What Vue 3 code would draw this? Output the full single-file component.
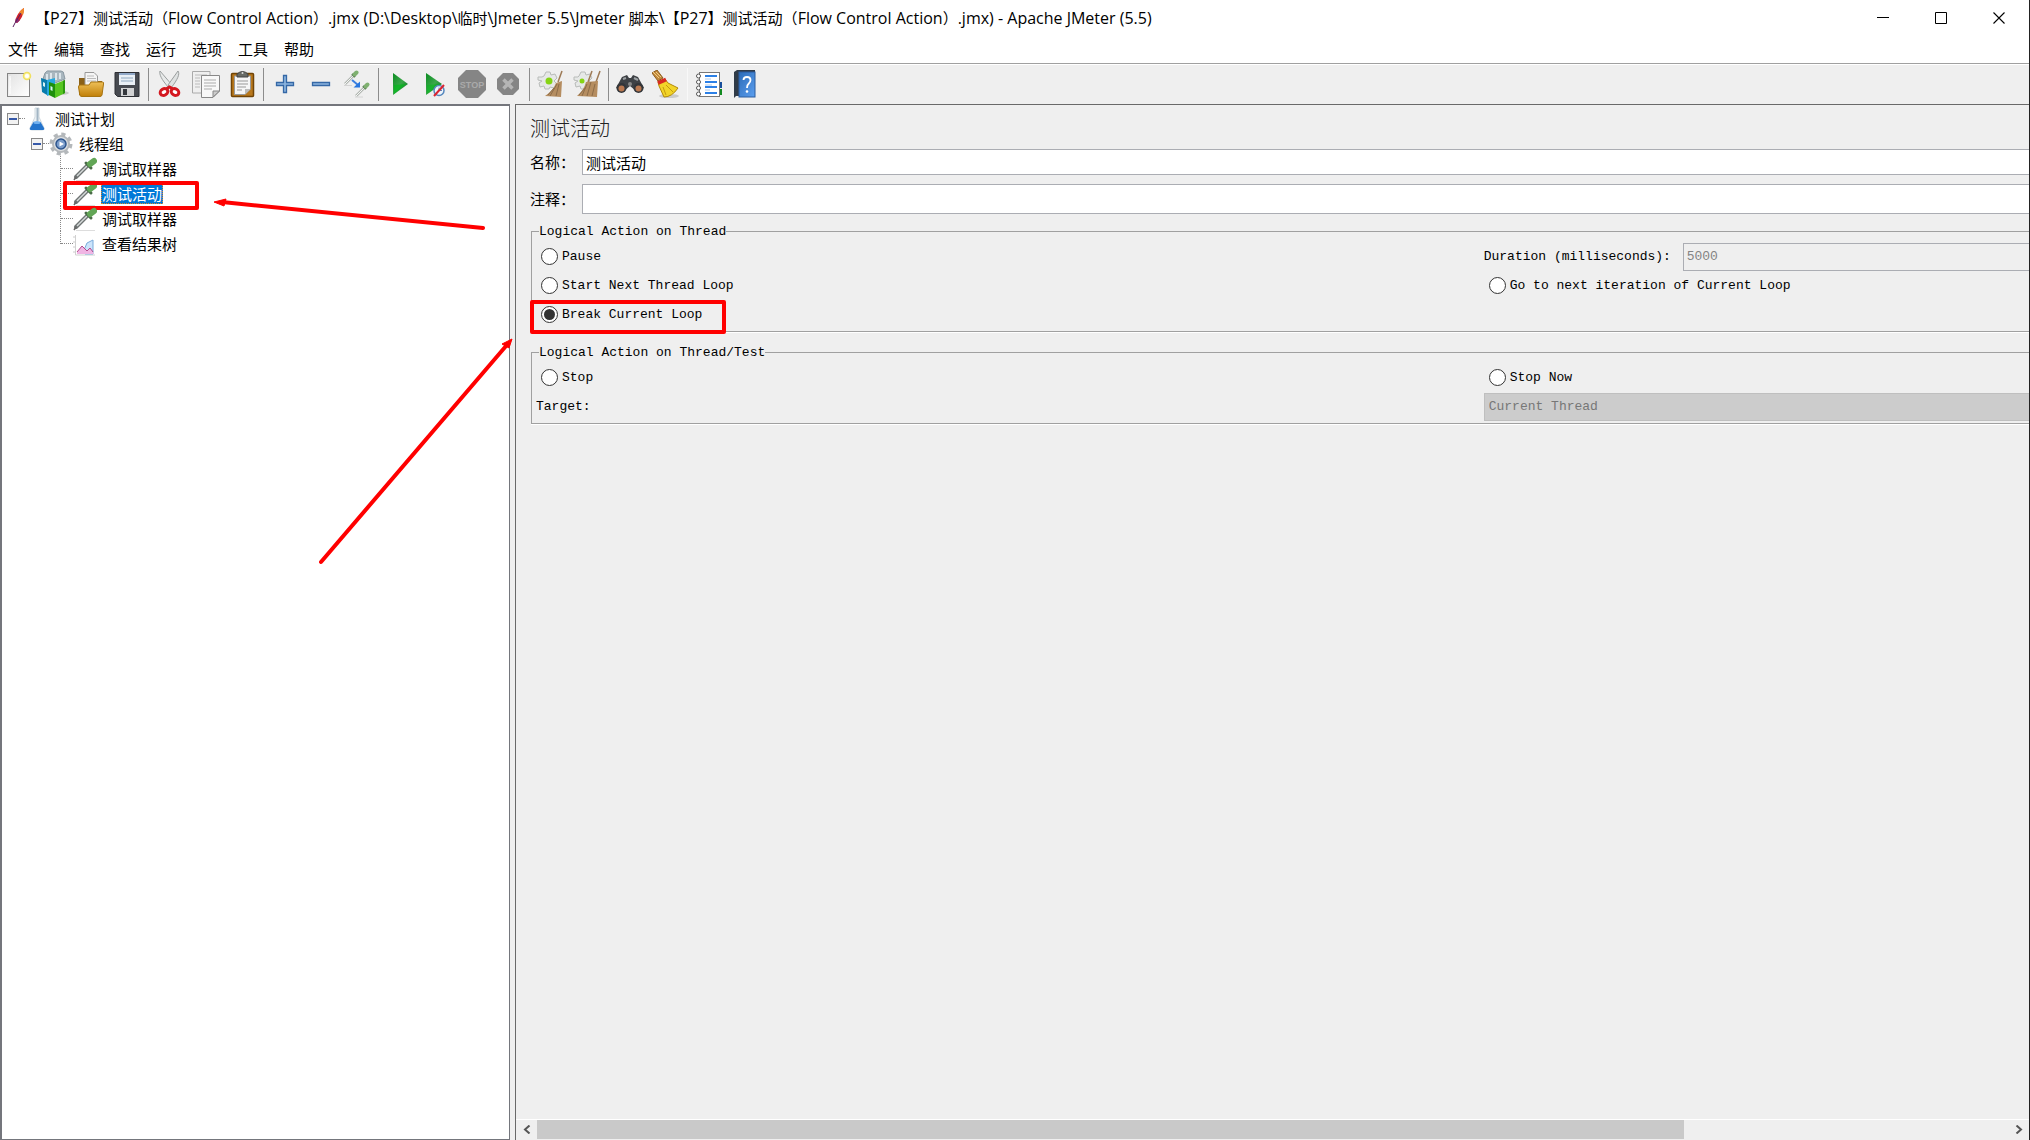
<script setup>
import { ref } from 'vue'

const menus = ['文件', '编辑', '查找', '运行', '选项', '工具', '帮助']
const action = ref('break')
const name = ref('测试活动')
const comment = ref('')
const duration = ref('5000')
</script>

<template>
  <div class="window">
    <header class="titlebar">
      <svg class="feather" width="14" height="22" viewBox="0 0 14 22">
        <path d="M12 1C8 3 4 9 3 15L5 16C9 13 12 7 12 1Z" fill="#d22128" />
        <path d="M12 1C10 2 8 4 7 6L11 8C12 5 12 3 12 1Z" fill="#f08a2c" />
        <path d="M4 11L3 15L5 16L8 13Z" fill="#8a2a72" />
        <path d="M9 6L3 16L1 20" fill="none" stroke="#5a2060" stroke-width="1" />
      </svg>
      <h1 class="caption"><span class="han">【</span>P27<span class="han">】测试活动（</span>Flow Control Action<span class="han">）</span>.jmx (D:\Desktop\<span class="han">临时</span>\Jmeter 5.5\Jmeter <span class="han">脚本</span>\<span class="han">【</span>P27<span class="han">】测试活动（</span>Flow Control Action<span class="han">）</span>.jmx) - Apache JMeter (5.5)</h1>
      <button class="winbtn" aria-label="Minimize"><svg width="12" height="12"><path d="M0 5.500H12" stroke="#000" /></svg></button>
      <button class="winbtn" aria-label="Maximize"><svg width="12" height="12"><path d="M.5 .5H11.500V11.500H.5Z" fill="none" stroke="#000" /></svg></button>
      <button class="winbtn" aria-label="Close"><svg width="12" height="12"><path d="M.5 .5L11.500 11.500M11.500 .5L.5 11.500" stroke="#000" stroke-width="1.100" /></svg></button>
    </header>

    <nav class="menubar">
      <button v-for="m in menus" :key="m" class="menu">{{ m }}</button>
    </nav>

    <div class="toolbar">
      <button class="tool" aria-label="New">
        <svg viewBox="0 0 28 28">
          <defs>
            <linearGradient id="paper" x1="0" y1="0" x2="1" y2="1"><stop offset="0" stop-color="#e2e2e2" /><stop offset="1" stop-color="#fff" /></linearGradient>
            <linearGradient id="folder" x1="0" y1="0" x2="0" y2="1"><stop offset="0" stop-color="#eec058" /><stop offset="1" stop-color="#c07f08" /></linearGradient>
            <linearGradient id="play" x1="0" y1="0" x2="1" y2="1"><stop offset="0" stop-color="#0c8c22" /><stop offset=".5" stop-color="#3aa84a" /><stop offset="1" stop-color="#006818" /></linearGradient>
            <linearGradient id="book" x1="0" y1="0" x2="1" y2="1"><stop offset="0" stop-color="#2c6cb8" /><stop offset="1" stop-color="#5c9ff0" /></linearGradient>
          </defs>
          <rect x="2.500" y="3.500" width="22" height="23" fill="url(#paper)" stroke="#858585" />
          <path d="M5 6V24M5 9h1M5 17h1" stroke="#fff" />
          <circle cx="22" cy="6" r="3.500" fill="#fff8b0" stroke="#f0e060" stroke-width="1.500" />
          <circle cx="22" cy="6" r="2" fill="#fff" />
        </svg>
      </button>
      <button class="tool" aria-label="Templates">
        <svg viewBox="0 0 28 28">
          <ellipse cx="18" cy="23" rx="10" ry="2" fill="#c8cac6" />
          <path d="M2 9L4 3Q6 0 9 1L20 1Q23 1 23 5L24 9L14 13Z" fill="#a9b7bf" stroke="#8a99a2" />
          <path d="M6 4v6M10 3v7M15 3v7M19 3v6" stroke="#dce5ea" stroke-width="2" />
          <path d="M0 8L6 10V25L1 22Z" fill="#087cad" /><path d="M6 10L14 8V23L6 26Z" fill="#27a8df" />
          <path d="M8 12L14 14V28L8 25Z" fill="#1d8f0c" /><path d="M14 14L24 10V23L14 28Z" fill="#56c620" />
          <path d="M2 12l2 1v4l-2-1ZM9.500 16l2 1v4l-2-1Z" fill="#d6f3f5" />
          <path d="M22 10.800L24 10V23L22 24Z" fill="#2c980f" />
        </svg>
      </button>
      <button class="tool" aria-label="Open">
        <svg viewBox="0 0 28 28">
          <path d="M2 8H8L10 11H25V25H2Z" fill="#8a6118" />
          <path d="M8 2.500H17L20.500 6V18H8Z" fill="#f5f5f5" stroke="#999" />
          <path d="M10 6h7M10 8.500h9M10 11h9" stroke="#bbb" />
          <path d="M3 15H12L14 12H25.500Q27 12 26.500 14L25 25Q24.500 26.500 23 26.500H5Q3 26.500 2.800 25L1.500 17Q1.500 15 3 15Z" fill="url(#folder)" stroke="#a87410" />
        </svg>
      </button>
      <button class="tool" aria-label="Save">
        <svg viewBox="0 0 28 28">
          <path d="M2 2.500H26V26.500H4.500L2 24Z" fill="#474a50" stroke="#2d2f34" />
          <rect x="6" y="3" width="16" height="12" fill="#e9eff5" /><rect x="6" y="3" width="16" height="2" fill="#91a9c8" />
          <path d="M8 8h12M8 11h12" stroke="#8fa8bf" />
          <rect x="8" y="18" width="13" height="8" fill="#d1d2d3" /><rect x="10" y="19" width="4" height="6" fill="#34373c" />
        </svg>
      </button>
      <span class="sep"></span>
      <button class="tool" aria-label="Cut">
        <svg viewBox="0 0 28 28">
          <path d="M4 1C3 4 5 9 13 18L16 15Z" fill="#e8eaea" stroke="#9a9e9e" /><path d="M22 1C24 4 22 9 15 18L12 15Z" fill="#dfe2e2" stroke="#9a9e9e" />
          <ellipse cx="8" cy="22" rx="4" ry="3.200" transform="rotate(-30 8 22)" fill="#fff" stroke="#d41820" stroke-width="3" />
          <ellipse cx="19" cy="22" rx="4" ry="3.200" transform="rotate(30 19 22)" fill="#fff" stroke="#d41820" stroke-width="3" />
          <path d="M10 19L13.500 17L17 19" fill="none" stroke="#d41820" stroke-width="3" />
        </svg>
      </button>
      <button class="tool" aria-label="Copy">
        <svg viewBox="0 0 28 28">
          <path d="M0.500 1.500H18V23H.5Z" fill="#efefef" stroke="#aaa" /><path d="M3 5h12M3 8h5M3 11h5M3 14h5M3 17h5" stroke="#bbb" />
          <path d="M9.500 5.500H27.500V21L21 27.500H9.500Z" fill="#f8f8f8" stroke="#888" /><path d="M12 10h12M12 13h12M12 16h12M12 19h8" stroke="#aaa" /><path d="M21 27V21H27.500Z" fill="#ccc" stroke="#888" />
        </svg>
      </button>
      <button class="tool" aria-label="Paste">
        <svg viewBox="0 0 28 28">
          <rect x="3.500" y="3.500" width="22" height="23" rx="1" fill="#b9781c" stroke="#704407" stroke-width="1.500" />
          <path d="M6.500 6H22.500V19L17 24.500H6.500Z" fill="#f6f6f6" stroke="#999" /><path d="M9 11h11M9 14h11M9 17h9M9 20h5" stroke="#999" /><path d="M17 24V19H22.500Z" fill="#bbb" />
          <path d="M9 7V4Q14.500-1 20 4V7Z" fill="#686b66" stroke="#444" /><circle cx="14.500" cy="3" r="1" fill="#ddd" />
        </svg>
      </button>
      <span class="sep"></span>
      <button class="tool" aria-label="Expand all">
        <svg viewBox="0 0 28 28"><path d="M12.500 5.500H15.500V12.500H22.500V15.500H15.500V22.500H12.500V15.500H5.500V12.500H12.500Z" fill="#8cb5df" stroke="#3568a6" stroke-width="1.300" /></svg>
      </button>
      <button class="tool" aria-label="Collapse all">
        <svg viewBox="0 0 28 28"><path d="M5.500 12.500H22.500V15.500H5.500Z" fill="#8cb5df" stroke="#3568a6" stroke-width="1.300" /></svg>
      </button>
      <button class="tool" aria-label="Toggle">
        <svg viewBox="0 0 28 28">
          <path d="M2 14L10 6" stroke="#b0b6b0" stroke-width="2.500" /><path d="M2 14L10 6" stroke="#f5f5f5" /><path d="M9 4L12 7" stroke="#4f6f4a" stroke-width="2" /><path d="M11.500 4.500L13.500 2.500" stroke="#7fb070" stroke-width="4" stroke-linecap="round" />
          <path d="M13 26L21 18" stroke="#b0b6b0" stroke-width="2.500" /><path d="M13 26L21 18" stroke="#f5f5f5" /><path d="M20 16L23 19" stroke="#4f6f4a" stroke-width="2" /><path d="M22.500 16.500L24.500 14.500" stroke="#7fb070" stroke-width="4" stroke-linecap="round" />
          <path d="M9 10L15 15" stroke="#3c80e0" stroke-width="2" /><path d="M17 11.500V17.500H10.500Z" fill="#2877e0" /><path d="M1 15.500h8M12 27h8" stroke="#d4d4d4" />
        </svg>
      </button>
      <span class="sep"></span>
      <button class="tool" aria-label="Start">
        <svg viewBox="0 0 28 28"><path d="M7 3L22 14L7 25Z" fill="url(#play)" /><path d="M8 15L20 14L8 24Z" fill="#00bb18" opacity=".65" /></svg>
      </button>
      <button class="tool" aria-label="Start no pauses">
        <svg viewBox="0 0 28 28">
          <path d="M4 3L20 14L4 25Z" fill="url(#play)" /><path d="M5 15L18 14L5 24Z" fill="#00bb18" opacity=".5" />
          <circle cx="17" cy="20.500" r="5" fill="#edf3fa" stroke="#5688be" stroke-width="1.500" /><path d="M17 17.500v3h3" fill="none" stroke="#5688be" /><path d="M12 26L22 15" stroke="#da2430" stroke-width="2" />
        </svg>
      </button>
      <button class="tool" aria-label="Stop" disabled>
        <svg viewBox="0 0 28 28"><path d="M8 0H20L28 8V20L20 28H8L0 20V8Z" fill="#858585" /><text x="14" y="18" text-anchor="middle" class="stop-text">STOP</text></svg>
      </button>
      <button class="tool" aria-label="Shutdown" disabled>
        <svg viewBox="0 0 28 28"><path d="M9 3H19L25 9V19L19 25H9L3 19V9Z" fill="#858585" /><path d="M9.500 9.500L18.500 18.500M18.500 9.500L9.500 18.500" stroke="#b5b5b5" stroke-width="3.500" /></svg>
      </button>
      <span class="sep"></span>
      <button class="tool" aria-label="Clear">
        <svg viewBox="0 0 28 28">
          <path d="M9 2h4l1 3 4-1 2 4-3 3 3 3-3 4-4-1-1 2H8l-1-3-4 1-1-4 3-2-4-1 0-3 4 0 2-1Z" fill="#e6e8e7" stroke="#b8bbb9" /><circle cx="12" cy="11" r="3.500" fill="#86d414" />
          <path d="M25 1L21 12" stroke="#9c7954" stroke-width="1.500" /><path d="M19 13L25 11L24 27L8 26Q16 21 19 13Z" fill="#b58d60" /><path d="M20 14L13 26M22 14L19 26M17 18L11 25" stroke="#8c6c48" />
        </svg>
      </button>
      <button class="tool" aria-label="Clear all">
        <svg viewBox="0 0 28 28">
          <path d="M8 2h4l1 3 4-1 2 4-3 3 3 3-3 4-4-1-1 2H8l-1-3-4 1-1-4 3-2-4-1 0-3 4 0 1-1Z" fill="#e6e8e7" stroke="#b8bbb9" /><circle cx="9" cy="11" r="2.500" fill="#86d414" />
          <path d="M19 1L15 12M27 1L23 12" stroke="#9c7954" stroke-width="1.500" /><path d="M13 12L25 11L24 27L4 26Q11 20 13 12Z" fill="#b58d60" /><path d="M14 14L9 26M18 12L14 26M22 14L19 26M13 17L6 25" stroke="#8c6c48" />
        </svg>
      </button>
      <span class="sep"></span>
      <button class="tool" aria-label="Search">
        <svg viewBox="0 0 28 28">
          <path d="M6 7L11 5L13 8H15L17 5L22 7L28 18L20 21L14 16L8 21L0 18Z" fill="#3e4145" /><path d="M7 9L10 8M18 8L22 10" stroke="#9da2a5" stroke-width="2" />
          <circle cx="5.500" cy="18" r="5" fill="#33363a" /><circle cx="22.500" cy="18" r="5" fill="#33363a" /><circle cx="5.500" cy="18.500" r="3" fill="#b97850" /><circle cx="22.500" cy="18.500" r="3" fill="#b97850" /><circle cx="14" cy="14" r="2" fill="#888" />
        </svg>
      </button>
      <button class="tool" aria-label="Reset search">
        <svg viewBox="0 0 28 28">
          <ellipse cx="17" cy="26" rx="10" ry="2" fill="#cbcbcb" /><path d="M0 3L5 0L11 8L6 11Z" fill="#c28a3c" stroke="#8c5c1d" /><path d="M1 2l6 6M4 2l5 5" stroke="#efcb83" />
          <path d="M6 12L13 9L16 13L26 18Q20 27 12 27L7 16Z" fill="#f2d428" stroke="#b38a08" /><path d="M11 17l3 8M14 15l7 7" stroke="#c49b10" /><path d="M6 13L14 9.500" stroke="#d82a20" stroke-width="4" />
        </svg>
      </button>
      <span class="sep faint"></span>
      <button class="tool" aria-label="Function helper">
        <svg viewBox="0 0 28 28">
          <rect x="4.500" y="2.500" width="20" height="24" fill="#fff" stroke="#777" /><path d="M10 6h12M10 12h12M10 17h12M10 23h12" stroke="#2c80e6" stroke-width="2" />
          <path d="M10 9h6M10 15h7M10 20h5" stroke="#aac9ed" /><g fill="#fff" stroke="#555"><circle cx="3.500" cy="6" r="2" /><circle cx="3.500" cy="12" r="2" /><circle cx="3.500" cy="18" r="2" /><circle cx="3.500" cy="24" r="2" /></g><path d="M25 12h2v6h-2Z" fill="#184f9c" /><path d="M25 19h2v6h-2Z" fill="#118a20" />
        </svg>
      </button>
      <button class="tool" aria-label="Help">
        <svg viewBox="0 0 28 28">
          <path d="M3 2L6 0H24V26H5L3 28Z" fill="#303b48" /><rect x="8" y="2" width="16" height="25" fill="url(#book)" stroke="#2a5d9f" />
          <path d="M12.500 10Q12.500 7 16 7Q19.500 7 19.500 10Q19.500 12 17.800 13.500Q16 15 16 18" fill="none" stroke="#fff" stroke-width="1.800" /><circle cx="16" cy="21.500" r="1.300" fill="#fff" />
        </svg>
      </button>
    </div>

    <main class="body">
      <aside class="tree">
        <ul class="nodes">
          <li class="node">
            <span class="toggle"></span><span class="dots"></span>
            <svg class="icon" viewBox="0 0 24 24">
              <path d="M10 1H14V10L19 21Q20 23 17 23H7Q4 23 5 21L10 10Z" fill="#edf2f5" stroke="#d0d9df" /><path d="M8.500 15H15.500L19 21Q20 23 17 23H7Q4 23 5 21Z" fill="#2474cc" /><path d="M12.500 1V14" stroke="#a3b6c5" stroke-width="2" /><ellipse cx="12" cy="15.500" rx="3.500" ry="1.500" fill="#71b0ee" />
            </svg>
            <span class="label">测试计划</span>
          </li>
          <li class="node level-1">
            <span class="toggle"></span><span class="dots"></span>
            <svg class="icon" viewBox="0 0 24 24">
              <circle cx="12" cy="12" r="9.500" fill="none" stroke="#b4b8bb" stroke-width="4" stroke-dasharray="4 3.460" /><circle cx="12" cy="12" r="8" fill="#dfe1e3" stroke="#b4b8bb" stroke-width="2" /><circle cx="12" cy="12" r="5" fill="#7a9cca" stroke="#2c548c" stroke-width="1.500" /><path d="M10.500 9.500L15 12L10.500 14.500Z" fill="#fff" />
            </svg>
            <span class="label">线程组</span>
          </li>
          <li v-for="(leaf, i) in ['调试取样器', '测试活动', '调试取样器']" :key="i" class="node level-2">
            <span class="dots wide"></span>
            <svg class="icon" viewBox="0 0 24 24">
              <path d="M3 20L14 9" stroke="#6f7474" stroke-width="4" stroke-linecap="round" /><path d="M4 19L14 9" stroke="#d5dad9" stroke-width="1.500" /><path d="M3 20L1 23" stroke="#666" stroke-width="1.500" /><path d="M13 6L18 11" stroke="#4a6b48" stroke-width="3" stroke-linecap="round" /><path d="M17 7L21 4" stroke="#62a656" stroke-width="6" stroke-linecap="round" /><path d="M3 23.500H22" stroke="#ddd" />
            </svg>
            <span class="label" :class="{ selected: i === 1 }">{{ leaf }}</span>
            <span v-if="i === 1" class="mark mark-node"></span>
          </li>
          <li class="node level-2">
            <span class="dots wide"></span>
            <svg class="icon" viewBox="0 0 24 24">
              <path d="M2.500 3V23H22" fill="none" stroke="#d0d0d0" /><path d="M0 5h2M0 10h2M0 15h2M0 20h2" stroke="#ccc" /><path d="M11 18L14 11L20 8V22H12Z" fill="#cce4fb" stroke="#78abdb" /><path d="M4 22V20L9 14L14 19L17 16L21 22Z" fill="#f0b5e4" /><path d="M4 20L9 14L14 19L17 16L20 20" fill="none" stroke="#b34b8c" />
            </svg>
            <span class="label">查看结果树</span>
          </li>
        </ul>
      </aside>

      <section class="pane">
        <div class="view">
          <form class="form" @submit.prevent>
            <h2 class="heading">测试活动</h2>
            <div class="field">
              <label for="name">名称：</label>
              <input id="name" v-model="name" type="text" />
            </div>
            <div class="field tall">
              <label for="comment">注释：</label>
              <input id="comment" v-model="comment" type="text" />
            </div>

            <fieldset class="group">
              <legend>Logical Action on Thread</legend>
              <div class="cols">
                <label class="radio"><input v-model="action" type="radio" name="action" value="pause" />Pause</label>
                <div class="duration">
                  <label for="duration">Duration (milliseconds):</label>
                  <input id="duration" v-model="duration" type="text" disabled />
                </div>
                <label class="radio"><input v-model="action" type="radio" name="action" value="next" />Start Next Thread Loop</label>
                <label class="radio"><input v-model="action" type="radio" name="action" value="iterate" />Go to next iteration of Current Loop</label>
                <label class="radio"><input v-model="action" type="radio" name="action" value="break" />Break Current Loop<span class="mark mark-radio"></span></label>
              </div>
            </fieldset>

            <fieldset class="group">
              <legend>Logical Action on Thread/Test</legend>
              <div class="cols">
                <label class="radio"><input v-model="action" type="radio" name="action" value="stop" />Stop</label>
                <label class="radio"><input v-model="action" type="radio" name="action" value="now" />Stop Now</label>
                <label class="target" for="target">Target:</label>
                <select id="target" disabled><option>Current Thread</option></select>
              </div>
            </fieldset>
          </form>
        </div>
        <div class="scrollbar">
          <button aria-label="Scroll left"><svg width="8" height="9"><path d="M6.500 .5L2 4.500L6.500 8.500" fill="none" stroke="#555" stroke-width="2" /></svg></button>
          <div class="track"><div class="thumb"></div></div>
          <button aria-label="Scroll right"><svg width="8" height="9"><path d="M1.500 .5L6 4.500L1.500 8.500" fill="none" stroke="#555" stroke-width="2" /></svg></button>
        </div>
      </section>
    </main>

    <svg class="arrows" width="520" height="570" viewBox="0 0 520 570">
      <g stroke="#f00" stroke-width="4" stroke-linecap="round"><path d="M222 202L483 228" /><path d="M321 562L506 346" /></g>
      <path d="M214 202L226 199L224 206ZM512 339L509 348L502 344Z" fill="#f00" stroke="#f00" />
    </svg>
  </div>
</template>

<style>
body {
  margin: 0;
  background: #efefef;
}
</style>

<style scoped>
.window {
  position: relative;
  display: flex;
  flex-direction: column;
  box-sizing: border-box;
  min-height: 100vh;
  overflow: hidden;
  border-right: 1px solid #222;
  background: #efefef;
  color: #000;
  font-family: "Liberation Mono", "Noto Sans CJK SC", monospace;
  font-size: 13px;
}
button {
  display: flex;
  align-items: center;
  justify-content: center;
  margin: 0;
  padding: 0;
  border: 0;
  background: none;
  color: inherit;
  font: inherit;
}
.titlebar {
  display: flex;
  align-items: center;
  height: 36px;
  background: #fff;
}
.feather {
  margin: 0 9px 0 12px;
}
.caption {
  flex: 1;
  margin: 0;
  font: 400 16px/20px "Open Sans", "Noto Sans CJK SC", sans-serif;
  white-space: nowrap;
}
.han {
  font-size: 15px;
}
.winbtn {
  width: 58px;
  height: 36px;
}
.winbtn:last-child {
  margin-right: 1px;
}
.menubar {
  display: flex;
  gap: 16px;
  height: 27px;
  padding-left: 8px;
  border-bottom: 1px solid #a0a0a0;
  background: #fff;
  font: 15px/20px "Noto Sans CJK SC", sans-serif;
}
.menu {
  height: 25px;
}
.toolbar {
  display: flex;
  height: 40px;
  padding-left: 1px;
  border-top: 1px solid #fff;
  box-sizing: border-box;
}
.tool {
  width: 36px;
  height: 38px;
}
.tool svg {
  width: 28px;
  height: 28px;
}
.stop-text {
  fill: #aaa;
  font: 700 9px "Liberation Sans", sans-serif;
}
.sep {
  width: 1px;
  height: 33px;
  margin: 3px;
  background: #8c8c8c;
}
.sep.faint {
  background: #f8f8f8;
}
.body {
  display: flex;
  flex: 1;
  gap: 5px;
}
.tree {
  flex: none;
  box-sizing: border-box;
  width: 510px;
  border: 2px solid #74767c;
  border-width: 2px 1px 1px 2px;
  background: #fff;
}
.nodes {
  margin: 0;
  padding: 0 0 0 5px;
  list-style: none;
  font: 400 15px/21px "Noto Sans CJK SC", sans-serif;
}
.node {
  position: relative;
  display: flex;
  align-items: center;
  height: 25px;
}
.level-1 {
  padding-left: 24px;
}
.level-2 {
  margin-left: 53px;
}
.level-2::before {
  content: "";
  align-self: flex-start;
  height: 25px;
  border-left: 1px dotted #888;
}
.level-2:last-child::before {
  height: 13px;
}
.toggle {
  box-sizing: border-box;
  width: 12px;
  height: 12px;
  border: 1px solid #888;
  background: linear-gradient(#3558a8, #3558a8) center / 8px 2px no-repeat #f2f2f2;
}
.dots {
  width: 6px;
  border-top: 1px dotted #888;
}
.dots.wide {
  width: 12px;
}
.icon {
  width: 24px;
  height: 24px;
  margin-right: 4px;
}
.label {
  padding: 0 1px;
  margin-left: 1px;
  color: #000;
}
.level-2 .label {
  margin-left: 0;
}
.label.selected {
  outline: 1px dotted #e08a2c;
  outline-offset: -1px;
  background: #0078d7;
  color: #fff;
}
.mark {
  position: absolute;
  box-sizing: border-box;
  border: 4px solid #f00;
  border-radius: 2px;
  pointer-events: none;
}
.mark-node {
  left: 3px;
  top: 0;
  width: 136px;
  height: 29px;
}
.mark-radio {
  left: -6px;
  top: -1px;
  width: 196px;
  height: 34px;
}
.pane {
  display: flex;
  flex: 1;
  flex-direction: column;
  min-width: 0;
  border-top: 1px solid #696969;
  border-left: 1px solid #696969;
}
.view {
  flex: 1;
  overflow: hidden;
  border-bottom: 1px solid #fff;
}
.form {
  width: 126%;
  padding: 8px 0 0 14px;
}
.heading {
  margin: 0 0 6px;
  color: #222;
  font: 300 20px/30px "Noto Sans CJK SC", sans-serif;
}
.field {
  display: flex;
  align-items: center;
  height: 26px;
  margin-bottom: 9px;
  font: 400 15px/20px "Noto Sans CJK SC", sans-serif;
}
.field label {
  width: 52px;
}
input[type="text"] {
  flex: 1;
  box-sizing: border-box;
  height: 100%;
  margin: 0;
  padding: 0 3px;
  border: 1px solid #abadb3;
  background: #fff;
  font: inherit;
}
.tall {
  height: 30px;
  margin-bottom: 7px;
}
.group {
  margin: 0 0 10px 1px;
  padding: 0 4px 2px;
  border: 1px solid #a0a0a0;
  box-shadow: 0 1px #fff;
}
.group legend {
  height: 21px;
  margin-left: 3px;
  padding: 0;
  line-height: 21px;
}
.cols {
  display: grid;
  grid-template-columns: 1fr 1fr;
  grid-auto-rows: 29px;
  align-items: center;
}
.radio {
  position: relative;
  display: flex;
  align-items: center;
  gap: 4px;
  height: 28px;
  padding-left: 5px;
}
.radio input {
  display: grid;
  place-items: center;
  box-sizing: border-box;
  width: 17px;
  height: 17px;
  margin: 0;
  appearance: none;
  border: 1px solid #333;
  border-radius: 50%;
  background: #fff;
}
.radio input:checked::before {
  content: "";
  width: 11px;
  height: 11px;
  border-radius: 50%;
  background: #333;
}
.duration {
  display: flex;
  align-items: center;
  height: 28px;
}
.duration label {
  width: 199px;
}
input[type="text"]:disabled {
  background: #efefef;
  color: #838383;
}
select {
  box-sizing: border-box;
  width: 100%;
  height: 28px;
  padding: 0 4px;
  appearance: none;
  border: 1px solid #bfbfbf;
  border-radius: 0;
  background: #ccc;
  color: #777;
  font: inherit;
  opacity: 1;
}
.scrollbar {
  display: flex;
  height: 19px;
  margin-bottom: 1px;
}
.scrollbar button {
  width: 21px;
}
.track {
  flex: 1;
}
.thumb {
  width: 78%;
  height: 100%;
  background: #c9c9c9;
}
.arrows {
  position: absolute;
  left: 0;
  top: 0;
  pointer-events: none;
}
</style>
